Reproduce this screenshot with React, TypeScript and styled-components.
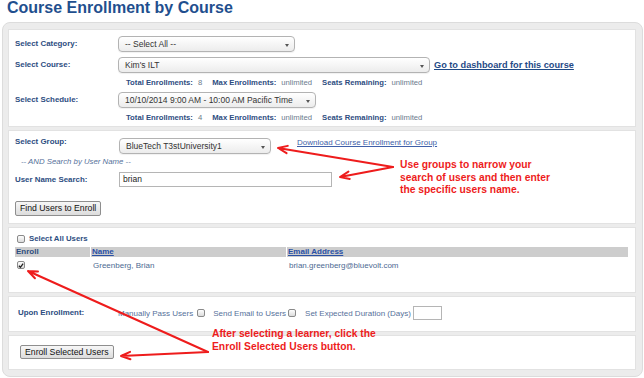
import React from "react";
import styled, { createGlobalStyle } from "styled-components";

const Global = createGlobalStyle`
  html, body { margin: 0; padding: 0; background: #ffffff; }
  body { font-family: "Liberation Sans", Arial, sans-serif; }
  * { box-sizing: border-box; }
`;

const Page = styled.div`
  position: relative;
  width: 644px;
  height: 378px;
  overflow: hidden;
`;

const Title = styled.h1`
  margin: 0 0 0 7px;
  font-size: 16px;
  line-height: 15px;
  font-weight: bold;
  color: #1f4f8e;
`;

const Panel = styled.div`
  margin: 7px 1px 0 2px;
  border: 1px solid #dcdcdc;
  border-radius: 8px;
  background: #ececec;
  padding: 6px 6px 6px 5px;
  display: flex;
  flex-direction: column;
  gap: 3px;
`;

const Section = styled.div<{ $h: number; $pad: string }>`
  height: ${(p) => p.$h}px;
  padding: ${(p) => p.$pad};
  background: #ffffff;
  border: 1px solid #e2e2e2;
  display: flex;
  flex-direction: column;
`;

const FieldRow = styled.div<{ $mt?: number; $h?: number; $align?: string }>`
  display: flex;
  align-items: ${(p) => p.$align || "center"};
  height: ${(p) => p.$h ?? 16}px;
  margin-top: ${(p) => p.$mt ?? 0}px;
`;

const Label = styled.div<{ $w?: number; $mt?: number }>`
  width: ${(p) => p.$w ?? 103}px;
  flex: none;
  margin-top: ${(p) => p.$mt ?? 0}px;
  font-size: 7.9px;
  line-height: 10px;
  font-weight: bold;
  color: #2d4d7f;
`;

const Select = styled.div<{ $w: number }>`
  position: relative;
  width: ${(p) => p.$w}px;
  height: 16px;
  flex: none;
  padding-left: 6px;
  border: 1px solid #b3b3b3;
  border-radius: 4px;
  background: linear-gradient(#ffffff, #ececec);
  box-shadow: 0 1px 1px rgba(0, 0, 0, 0.06);
  font-size: 8.5px;
  line-height: 14px;
  color: #333333;
  white-space: nowrap;
  &::after {
    content: "";
    position: absolute;
    right: 5px;
    top: 7px;
    border-left: 2.5px solid transparent;
    border-right: 2.5px solid transparent;
    border-top: 3px solid #555555;
  }
`;

const TextInput = styled.div<{ $w: number; $h: number; $ml?: number }>`
  width: ${(p) => p.$w}px;
  height: ${(p) => p.$h}px;
  flex: none;
  margin-left: ${(p) => p.$ml ?? 0}px;
  padding-left: 3px;
  border: 1px solid #b5b5b5;
  background: #ffffff;
  font-size: 8.5px;
  line-height: ${(p) => p.$h - 2}px;
  color: #222222;
`;

const BoldLink = styled.a`
  margin-left: 4px;
  font-size: 9.2px;
  font-weight: bold;
  color: #1f4a86;
  text-decoration: underline;
  white-space: nowrap;
`;

const SmallLink = styled.a<{ $ml: number }>`
  margin-left: ${(p) => p.$ml}px;
  font-size: 8px;
  line-height: 9px;
  color: #3f5fa9;
  text-decoration: underline;
  white-space: nowrap;
`;

const Stats = styled.div<{ $mt: number }>`
  display: flex;
  align-items: center;
  height: 10px;
  margin-top: ${(p) => p.$mt}px;
  margin-left: 111px;
  font-size: 7.7px;
  white-space: nowrap;
`;

const StatLabel = styled.span`
  font-weight: bold;
  color: #2d4d7f;
  margin-right: 5px;
`;

const StatValue = styled.span`
  color: #6b7a8c;
  margin-right: 10px;
`;

const Hint = styled.div`
  margin: 3px 0 0 6px;
  height: 10px;
  font-size: 7.8px;
  line-height: 10px;
  font-style: italic;
  color: #56719a;
`;

const Button = styled.div<{ $mt?: number; $h: number }>`
  align-self: flex-start;
  margin-top: ${(p) => p.$mt ?? 0}px;
  height: ${(p) => p.$h}px;
  padding: 0 4px;
  border: 1px solid #8e8e8e;
  border-radius: 2px;
  background: linear-gradient(#f7f7f7, #dcdcdc);
  font-size: 8.7px;
  line-height: ${(p) => p.$h - 2}px;
  color: #111111;
  white-space: nowrap;
`;

const Box = styled.span<{ $ml?: number }>`
  display: inline-flex;
  align-items: center;
  justify-content: center;
  width: 8px;
  height: 8px;
  flex: none;
  margin-left: ${(p) => p.$ml ?? 0}px;
  border: 1px solid #8a8a8a;
  border-radius: 2px;
  background: linear-gradient(#fdfdfd, #dcdcdc);
`;

const Check = ({ checked, ml }: { checked?: boolean; ml?: number }) => (
  <Box $ml={ml}>
    {checked && (
      <svg width="7" height="7" viewBox="0 0 7 7">
        <path d="M1 3.8 L2.8 5.6 L6 1.2" fill="none" stroke="#222" strokeWidth="1.5" />
      </svg>
    )}
  </Box>
);

const SelectAllRow = styled.div`
  display: flex;
  align-items: center;
  height: 9px;
  padding-left: 2px;
  gap: 4px;
  font-size: 7.8px;
  font-weight: bold;
  color: #2d4d7f;
`;

const Grid = styled.div`
  display: grid;
  grid-template-columns: 75px 195px 1fr;
  column-gap: 1px;
  margin-top: 4px;
`;

const HeadCell = styled.div`
  height: 10px;
  padding-left: 1px;
  background: #cdcdcd;
  font-size: 8px;
  line-height: 10px;
  font-weight: bold;
  color: #2d4d7f;
`;

const HeadLink = styled.a`
  color: #2950a5;
  text-decoration: underline;
`;

const Cell = styled.div`
  height: 14px;
  padding-left: 2px;
  display: flex;
  align-items: center;
  font-size: 8px;
  color: #4d6a92;
  margin-top: 1px;
`;

const OptionsRow = styled.div`
  display: flex;
  align-items: center;
  height: 100%;
  padding-bottom: 2px;
  font-size: 8px;
  color: #56719a;
  white-space: nowrap;
`;

const OptText = styled.span<{ $ml?: number }>`
  margin-left: ${(p) => p.$ml ?? 0}px;
`;

const Note = styled.div<{ $x: number; $y: number; $lh: number }>`
  position: absolute;
  left: ${(p) => p.$x}px;
  top: ${(p) => p.$y}px;
  font-size: 10.3px;
  line-height: ${(p) => p.$lh}px;
  font-weight: bold;
  color: #ee1c1c;
  white-space: nowrap;
`;

const Overlay = styled.svg`
  position: absolute;
  left: 0;
  top: 0;
  pointer-events: none;
`;

type Pt = [number, number];
const arrows: { from: Pt; to: Pt }[] = [
  { from: [393, 167], to: [278, 148] },
  { from: [393, 167], to: [340, 177] },
  { from: [208, 352], to: [28, 271] },
  { from: [208, 352], to: [121, 356] },
];

function arrowPath(from: Pt, to: Pt) {
  const a = Math.atan2(from[1] - to[1], from[0] - to[0]);
  const len = 10;
  const ang = 0.38;
  const p1 = [to[0] + len * Math.cos(a + ang), to[1] + len * Math.sin(a + ang)];
  const p2 = [to[0] + len * Math.cos(a - ang), to[1] + len * Math.sin(a - ang)];
  return `M${from[0]} ${from[1]} L${to[0]} ${to[1]} M${p1[0]} ${p1[1]} L${to[0]} ${to[1]} L${p2[0]} ${p2[1]}`;
}

const StatsLine = ({ total }: { total: string }) => (
  <>
    <StatLabel>Total Enrollments:</StatLabel>
    <StatValue>{total}</StatValue>
    <StatLabel>Max Enrollments:</StatLabel>
    <StatValue>unlimited</StatValue>
    <StatLabel>Seats Remaining:</StatLabel>
    <StatValue>unlimited</StatValue>
  </>
);

export default function App() {
  return (
    <Page>
      <Global />
      <Title>Course Enrollment by Course</Title>
      <Panel>
        <Section $h={98} $pad="6px 6px 0 6px">
          <FieldRow>
            <Label>Select Category:</Label>
            <Select $w={177}>-- Select All --</Select>
          </FieldRow>
          <FieldRow $mt={5}>
            <Label>Select Course:</Label>
            <Select $w={312}>Kim's ILT</Select>
            <BoldLink>Go to dashboard for this course</BoldLink>
          </FieldRow>
          <Stats $mt={4}>
            <StatsLine total="8" />
          </Stats>
          <FieldRow $mt={5}>
            <Label>Select Schedule:</Label>
            <Select $w={198}>10/10/2014 9:00 AM - 10:00 AM Pacific Time</Select>
          </FieldRow>
          <Stats $mt={4}>
            <StatsLine total="4" />
          </Stats>
        </Section>

        <Section $h={94} $pad="7px 6px 0 6px">
          <FieldRow $align="flex-start">
            <Label $w={104} $mt={-1}>Select Group:</Label>
            <Select $w={152}>BlueTech T3stUniversity1</Select>
            <SmallLink $ml={26}>Download Course Enrollment for Group</SmallLink>
          </FieldRow>
          <Hint>-- AND Search by User Name --</Hint>
          <FieldRow $mt={5} $h={15}>
            <Label $w={104}>User Name Search:</Label>
            <TextInput $w={213} $h={15}>brian</TextInput>
          </FieldRow>
          <Button $mt={14} $h={15}>Find Users to Enroll</Button>
        </Section>

        <Section $h={66} $pad="6px 7px 0 6px">
          <SelectAllRow>
            <Check />
            <span>Select All Users</span>
          </SelectAllRow>
          <Grid>
            <HeadCell>Enroll</HeadCell>
            <HeadCell>
              <HeadLink>Name</HeadLink>
            </HeadCell>
            <HeadCell>
              <HeadLink>Email Address</HeadLink>
            </HeadCell>
            <Cell>
              <Check checked />
            </Cell>
            <Cell>Greenberg, Brian</Cell>
            <Cell>brian.greenberg@bluevolt.com</Cell>
          </Grid>
        </Section>

        <Section $h={36} $pad="0 6px 0 9px">
          <OptionsRow>
            <Label $w={100}>Upon Enrollment:</Label>
            <OptText>Manually Pass Users</OptText>
            <Check ml={4} />
            <OptText $ml={8}>Send Email to Users</OptText>
            <Check ml={2} />
            <OptText $ml={9}>Set Expected Duration (Days)</OptText>
            <TextInput $w={29} $h={14} $ml={2} />
          </OptionsRow>
        </Section>

        <Section $h={35} $pad="9px 6px 0 11px">
          <Button $h={14}>Enroll Selected Users</Button>
        </Section>
      </Panel>

      <Note $x={400} $y={159} $lh={12.5}>
        Use groups to narrow your
        <br />
        search of users and then enter
        <br />
        the specific users name.
      </Note>
      <Note $x={212} $y={326.5} $lh={13}>
        After selecting a learner, click the
        <br />
        Enroll Selected Users button.
      </Note>

      <Overlay width="644" height="378" viewBox="0 0 644 378">
        {arrows.map((a, i) => (
          <path
            key={i}
            d={arrowPath(a.from, a.to)}
            fill="none"
            stroke="#ee1c1c"
            strokeWidth="2"
            strokeLinecap="round"
            strokeLinejoin="round"
          />
        ))}
      </Overlay>
    </Page>
  );
}
